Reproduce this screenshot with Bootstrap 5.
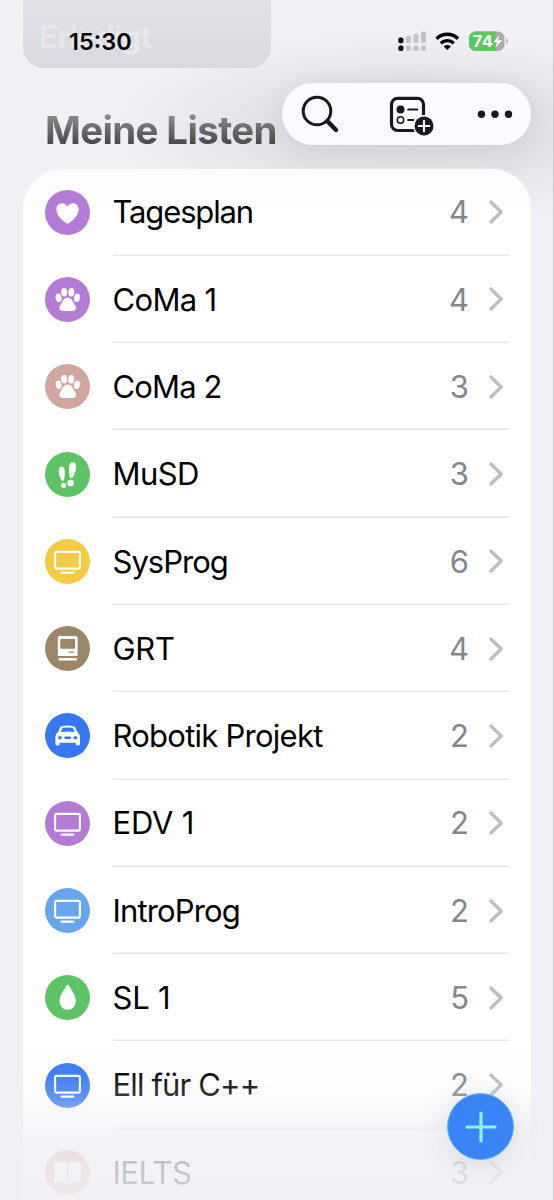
<!DOCTYPE html>
<html lang="de">
<head>
<meta charset="utf-8">
<meta name="viewport" content="width=device-width, initial-scale=1">
<title>Meine Listen</title>
<link href="https://cdn.jsdelivr.net/npm/bootstrap@5.3.0/dist/css/bootstrap.min.css" rel="stylesheet">
<style>
  body { font-family: Inter, sans-serif; background: #f0f0f5; color: #000; }
  .screen { width: 554px; height: 1200px; border-right: 1px solid #c9c9cf; padding: 0 22px 0 23px;
    background: radial-gradient(ellipse 300px 95px at 410px 128px, #dddde2 0, #e2e2e7 50%, rgba(240,240,245,0) 100%), #f0f0f5; }
  .done-tile { width: 248px; height: 68px; border-radius: 0 0 21px 21px; background: linear-gradient(#e1e2e7, #d9dadf); }
  .ghost-label { left: 16px; top: 18px; font-size: 31px; font-weight: 700; line-height: 38px; color: #e7e8ec; letter-spacing: -.7px; }
  .clock { left: 46px; top: 28px; font-size: 23.5px; font-weight: 600; line-height: 28px; }
  .status { right: 45px; top: 30px; gap: 9px; }
  .section-title { height: 100.5px; padding: 44px 0 0 22px; font-size: 38.5px; font-weight: 700; line-height: 37px; letter-spacing: -.65px; white-space: nowrap; }
  .section-title span { background: linear-gradient(#8c8c8f 15%, #39393b 85%); -webkit-background-clip: text; background-clip: text; color: transparent; padding-bottom: 6px; }
  .toolpill { left: 282px; top: 83px; width: 249px; height: 62px; border-radius: 31px; background: #fafaff; box-shadow: 0 6px 26px rgba(60,60,70,.12); z-index: 3; }
  .lists { border-radius: 39px 39px 0 0; height: 1032px; background: linear-gradient(#fbfbfc, #fff 40px); }
  .entry { height: 87.3px; flex: none; padding-left: 22px; }
  .entry .disc { width: 45px; height: 45px; flex: none; margin-right: 23px; }
  .entry .body-line { box-shadow: inset 0 -1.5px #e6e6e8; margin-right: 22px; padding-right: 5px; }
  .entry .name { font-size: 31px; white-space: nowrap; padding-top: 1px; margin-left: -.5px; }
  .entry .count { font-size: 31px; color: #868689; margin-right: 19px; padding-top: 1px; }
  .fade-out { height: 165px; background: linear-gradient(rgba(240,240,245,0), rgba(240,240,245,.07) 24%, rgba(240,240,245,.24) 38%, rgba(240,240,245,.66) 58%, rgba(240,240,245,.80) 76%, rgba(240,240,245,.88)); z-index: 2; }
  .fab { left: 447px; top: 1093px; width: 67px; height: 67px; background: #3a84f7; border: 1.5px solid #55bdfa; box-shadow: 0 4px 28px rgba(60,60,80,.15); z-index: 4; }
</style>
</head>
<body>
<svg width="0" height="0" class="position-absolute">
  <defs>
    <symbol id="i-heart" viewBox="0 0 45 45"><path fill="#fff" d="M22.5 34C21 33.2 11.3 27 11.3 19.6c0-3.8 2.6-6.4 5.8-6.4 2.400 0 4.300 1.300 5.400 3.300 1.100-2 3-3.300 5.400-3.300 3.200 0 5.800 2.600 5.800 6.400C33.700 27 24 33.200 22.500 34z"/></symbol>
    <symbol id="i-paw" viewBox="0 0 45 45"><g fill="#fff"><ellipse cx="13.600" cy="20.800" rx="2.900" ry="4.300" transform="rotate(-12 13.600 20.800)"/><ellipse cx="19.200" cy="15.200" rx="3" ry="4.300" transform="rotate(-4 19.200 15.200)"/><ellipse cx="26.300" cy="15.200" rx="3" ry="4.300" transform="rotate(4 26.300 15.200)"/><ellipse cx="31.900" cy="20.800" rx="2.900" ry="4.300" transform="rotate(12 31.900 20.800)"/><path d="M22.700 20.600c4 0 5 4 7 6.800 2.400 3.200 1.300 6.500-2.200 6.500h-9.600c-3.500 0-4.600-3.300-2.200-6.500 2-2.800 3-6.800 7-6.800z"/></g></symbol>
    <symbol id="i-steps" viewBox="0 0 45 45"><g fill="#fff"><path d="M16.500 14.500c2.300 0 3.300 2.500 3.300 6 0 4-.3 8.600-2 8.600s-4.100-6-4.100-9.800c0-2.900.8-4.800 2.800-4.800zM27.800 10c2.300 0 3.500 2.300 3.300 5.400-.3 4.200-2.800 10.900-4.800 10.900s-2.300-5.300-2.300-9.300c0-4 1.300-7 3.800-7z"/><circle cx="18.700" cy="33.300" r="2.600"/><circle cx="25.600" cy="31" r="3.200"/></g></symbol>
    <symbol id="i-tv" viewBox="0 0 45 45"><g fill="none" stroke="#fff"><rect x="10.100" y="12.900" width="24.800" height="16.700" rx="1.400" stroke-width="2.100"/><path d="M16.700 33.700h11.600" stroke-width="2.300" stroke-linecap="round"/></g></symbol>
    <symbol id="i-mac" viewBox="0 0 45 45"><path fill="#fff" fill-rule="evenodd" d="M14.500 10h16.300q1.800 0 1.800 1.800V30H12.800V11.800Q12.800 10 14.500 10zM16.200 13q-.9 0-.9 1v7.800q0 1 .9 1h13q.9 0 .9-1V14q0-1-.9-1zM23.600 25.500h5.600v1.300h-5.600zM13.700 32h18v2.600h-18z"/></symbol>
    <symbol id="i-car" viewBox="0 0 45 45"><path fill="#fff" fill-rule="evenodd" d="M15 14.600q.6-1.600 2.400-1.700 5.300-.6 10.600 0 1.800.1 2.400 1.700l2 4.700q2.600 1.300 2.600 4.500v7q0 1.800-1.600 1.800h-1.200q-1.500 0-1.500-1.800v-1H14.700v1q0 1.800-1.500 1.800H12q-1.600 0-1.600-1.800v-7q0-3.200 2.600-4.500zM17.200 15.500l-1.400 3.400q6.900-.6 13.800 0l-1.400-3.400q-.3-.7-1.100-.8-4.400-.5-8.800 0-.8.100-1.100.8zM15 23a1.800 1.800 0 1 0 .010 3.600A1.800 1.800 0 0 0 15 23zM30.400 23a1.800 1.800 0 1 0 .010 3.600A1.800 1.800 0 0 0 30.400 23zM20.500 23.500q-1.300.1-1.300 1.300t1.300 1.300h4.400q1.300-.1 1.300-1.300t-1.300-1.300z"/></symbol>
    <symbol id="i-drop" viewBox="0 0 45 45"><path fill="#fff" d="M22.700 9.800c.6 0 1 .3 1.400 1 3 5.200 6.700 10 6.700 15.200 0 5-3.300 8.800-8.100 8.800s-8.100-3.800-8.100-8.800c0-5.200 3.700-10 6.700-15.200.4-.7.8-1 1.400-1z"/></symbol>
    <symbol id="i-book" viewBox="0 0 45 45"><path fill="#fff" d="M22.100 14.200C18.500 11 13.500 11.300 10.200 13.200q-.7.5-.7 1.300v17.800c0 1 .8 1.400 1.700 1 3.600-1.500 7.600-1.400 10.900.9zM23.100 14.200c3.600-3.200 8.600-2.900 11.900-1q.7.500.7 1.300v17.800c0 1-.8 1.400-1.700 1-3.600-1.500-7.600-1.400-10.900.9z"/></symbol>
    <symbol id="i-chev" viewBox="0 0 16 26"><path d="M2.900 3.100 13.200 13 2.900 22.900" fill="none" stroke="#bfbfc2" stroke-width="3.500" stroke-linecap="round" stroke-linejoin="round"/></symbol>
  </defs>
</svg>

<main class="screen position-relative overflow-hidden">
  <div class="done-tile position-relative">
    <span class="ghost-label position-absolute">Erledigt</span>
    <span class="clock position-absolute">15:30</span>
  </div>
  <div class="status position-absolute d-flex">
    <svg width="28" height="22" viewBox="0 0 28 22"><g fill="#c3c3c7"><rect x="8" y="6" width="5" height="7" rx="1.500"/><rect x="15.500" y="4" width="5" height="9" rx="1.500"/><rect x="23" y="1.500" width="5" height="11.500" rx="1.500"/><rect x="8" y="15.500" width="5" height="5.500" rx="1.800"/><rect x="15.500" y="15.500" width="5" height="5.500" rx="1.800"/><rect x="23" y="15.500" width="5" height="5.500" rx="1.800"/></g><rect x=".4" y="7.500" width="5" height="5.800" rx="1.700"/><rect x=".4" y="15.500" width="5" height="5.500" rx="1.800"/></svg>
    <svg width="25" height="22" viewBox="0 0 25 22"><g fill="none" stroke="#000" stroke-width="3.400"><path d="M1.500 8.700a15.500 15.500 0 0 1 21.600 0"/><path d="M5.800 13.200a9.500 9.500 0 0 1 13 0"/></g><path d="M12.300 19.900 8.700 16.500a5.200 5.200 0 0 1 7.200 0z"/></svg>
    <svg width="39" height="22" viewBox="0 0 39 22"><defs><clipPath id="batt"><rect y="1.500" width="35.500" height="19.500" rx="6.500"/></clipPath></defs><g clip-path="url(#batt)"><rect width="39" height="22" fill="#aaaaae"/><rect width="26.500" height="22" fill="#5bc95f"/></g><path d="M37 8.300q2 1 2 2.900t-2 2.900z" fill="#b3b3b7"/><text x="3.800" y="17.200" font-family="Inter" font-weight="700" font-size="16.500" fill="#fff" textLength="20">74</text><path d="m30.700 5-6.500 7.200h4l-2 5.500 6.800-7.400h-4.200z" fill="#fff"/></svg>
  </div>
  <h1 class="section-title mb-0"><span>Meine Listen</span></h1>

  <nav class="toolpill position-absolute">
    <svg width="249" height="62" viewBox="0 0 249 62" fill="none" stroke="#19191d" stroke-linecap="round">
      <circle cx="35" cy="28" r="13.800" stroke-width="3"/><path d="M45.200 38 54 47" stroke-width="4.400"/>
      <rect x="109.500" y="15.300" width="32" height="32.200" rx="6" stroke-width="3.200"/>
      <circle cx="118.500" cy="26.500" r="4" fill="#19191d" stroke="none"/><circle cx="118.500" cy="37" r="3.200" stroke-width="1.500"/>
      <path d="M126.300 26.500h9M126.300 37h5" stroke-width="2.200"/>
      <circle cx="142" cy="43" r="11" fill="#fafaff" stroke="none"/><circle cx="142" cy="43" r="9.500" fill="#19191d" stroke="none"/>
      <path d="M142 37.700v10.600M136.700 43h10.600" stroke="#fafaff" stroke-width="2.100"/>
      <g fill="#19191d" stroke="none"><circle cx="199.500" cy="31.300" r="3.700"/><circle cx="213" cy="31.300" r="3.700"/><circle cx="226.500" cy="31.300" r="3.700"/></g>
    </svg>
  </nav>

  <section class="lists d-flex flex-column overflow-hidden" id="lists"></section>
  <div class="fade-out position-absolute start-0 end-0 bottom-0"></div>
  <button class="fab position-absolute rounded-circle p-0 d-flex align-items-center justify-content-center" aria-label="Hinzufügen">
    <svg width="34" height="34" viewBox="0 0 34 34"><path d="M17 3v28M3 17h28" stroke="#8cf3fc" stroke-width="3.200" stroke-linecap="round"/></svg>
  </button>
</main>

<script src="https://cdn.jsdelivr.net/npm/bootstrap@5.3.0/dist/js/bootstrap.bundle.min.js"></script>
<script>
  // name, open reminders, icon, colour, tracking in px
  const lists = [
    ['Tagesplan', 4, 'heart', '#b37bd6', -1.15],
    ['CoMa 1', 4, 'paw', '#b37bd6', -.65],
    ['CoMa 2', 3, 'paw', '#d1a69f', -.85],
    ['MuSD', 3, 'steps', '#5dc466', -.6],
    ['SysProg', 6, 'tv', '#f4cc44', -1],
    ['GRT', 4, 'mac', '#998768', -.3],
    ['Robotik Projekt', 2, 'car', '#3577f5', -.75],
    ['EDV 1', 2, 'tv', '#b37bd6', -.2],
    ['IntroProg', 2, 'tv', '#67a6ed', -.85],
    ['SL 1', 5, 'drop', '#5dc466', -.2],
    ['Ell für C++', 2, 'tv', '#3577f5', -.85],
    ['IELTS', 3, 'book', '#d9aaa5', -.5]
  ];
  document.getElementById('lists').innerHTML = lists.map(([name, n, icon, colour, track]) => `
    <div class="entry d-flex align-items-center">
      <svg class="disc rounded-circle" style="background:${colour}"><use href="#i-${icon}"/></svg>
      <div class="body-line d-flex align-items-center flex-grow-1 h-100">
        <span class="name me-auto" style="letter-spacing:${track}px">${name}</span>
        <span class="count">${n}</span>
        <svg width="16" height="26"><use href="#i-chev"/></svg>
      </div>
    </div>`).join('');
</script>
</body>
</html>
